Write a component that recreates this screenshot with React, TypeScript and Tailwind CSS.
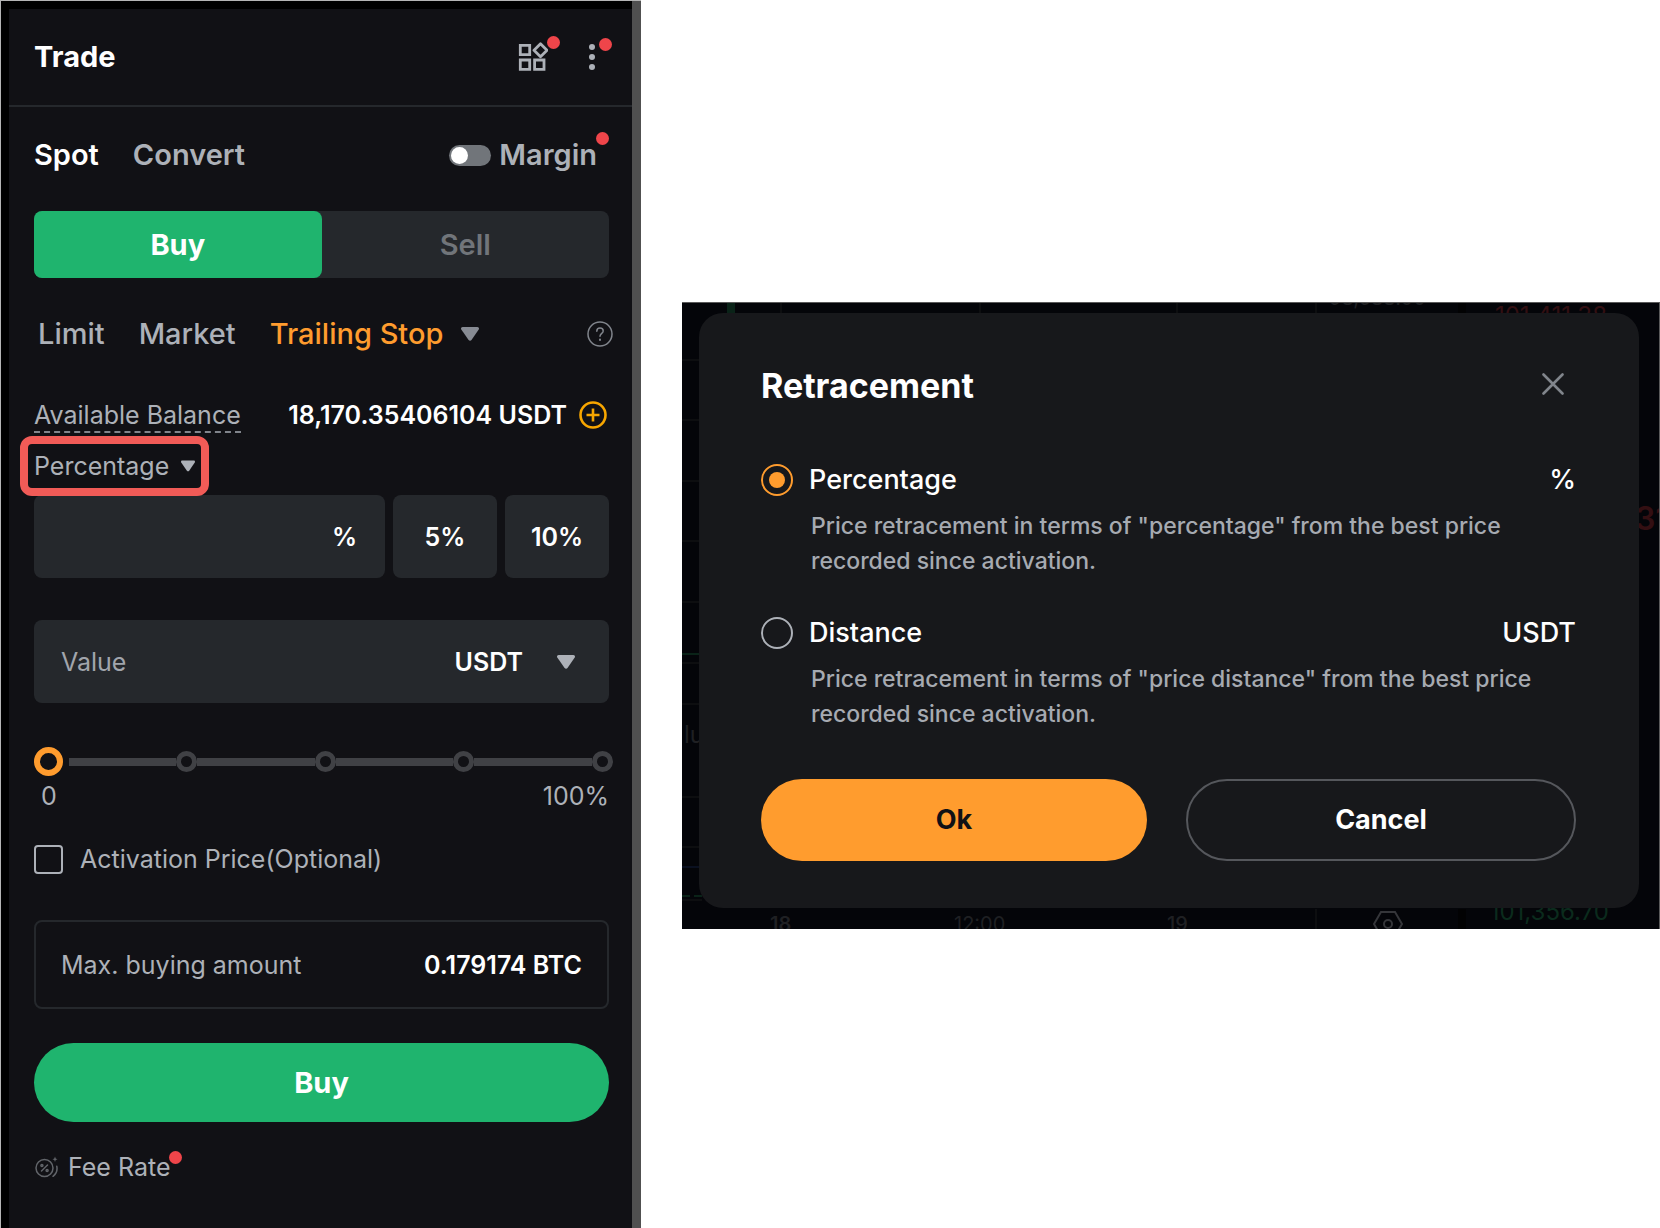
import { useState } from "react";

const Caret = ({ className }: { className: string }) => (
  <svg viewBox="0 0 18 14" fill="currentColor" className={className}>
    <path d="M1.6 0h14.8c1.3 0 2 1.400 1.300 2.500l-7.200 10.500c-.7 1-2.200 1-2.900 0L.3 2.500C-.4 1.400.3 0 1.600 0z" />
  </svg>
);

const GridIcon = () => (
  <svg
    viewBox="0 0 30 30"
    fill="none"
    stroke="currentColor"
    strokeWidth="2.800"
    className="size-[30px]"
  >
    <path d="M2.300 3.300h9.400v9.400H2.300zM2.300 18h9.400v9.400H2.300zM16.600 18H26v9.400h-9.400z" />
    <path d="M22.500 1.800 29 8.300 22.500 14.800 16 8.300z" strokeLinejoin="round" />
  </svg>
);

const MoreIcon = () => (
  <svg viewBox="0 0 8 26" fill="currentColor" className="w-2 h-[26px]">
    <circle cx="4" cy="3" r="3" />
    <circle cx="4" cy="13" r="3" />
    <circle cx="4" cy="23" r="3" />
  </svg>
);

const HelpIcon = () => (
  <svg
    viewBox="0 0 26 26"
    fill="none"
    stroke="currentColor"
    strokeWidth="1.500"
    strokeLinecap="round"
    className="size-[26px]"
  >
    <circle cx="13" cy="13" r="12" />
    <path d="M9.800 10.200c0-1.900 1.400-3.200 3.200-3.200s3.200 1.200 3.200 2.900c0 2.400-3.200 2.600-3.200 5.400" />
    <path d="M13 18.600v.4" strokeWidth="2" />
  </svg>
);

const PlusIcon = () => (
  <svg
    viewBox="0 0 28 28"
    fill="none"
    stroke="currentColor"
    strokeWidth="2.600"
    className="size-7"
  >
    <circle cx="14" cy="14" r="12.500" />
    <path d="M14 7.500v13M7.500 14h13" />
  </svg>
);

const CloseIcon = () => (
  <svg
    viewBox="0 0 22 22"
    fill="none"
    stroke="currentColor"
    strokeWidth="2.600"
    strokeLinecap="round"
    className="size-[22px]"
  >
    <path d="M1.500 1.500l19 19M20.500 1.500l-19 19" />
  </svg>
);

const FeeIcon = () => (
  <svg
    viewBox="0 0 24 22"
    fill="none"
    stroke="currentColor"
    strokeWidth="1.500"
    strokeLinecap="round"
    className="w-6 h-[22px]"
  >
    <circle cx="10.500" cy="12" r="8.500" />
    <path d="M7.500 15l6-6" />
    <circle cx="7.900" cy="9.600" r="1" />
    <circle cx="13.100" cy="14.400" r="1" />
    <path d="M19 20.300c3.400-2.600 4.600-6 3.800-10" />
    <path
      d="M21 .5l.7 2 1.800.8-1.800.7-.7 2-.7-2-1.800-.7 1.800-.8z"
      fill="currentColor"
      stroke="none"
    />
  </svg>
);

const SettingsIcon = () => (
  <svg
    viewBox="0 0 30 26"
    fill="none"
    stroke="currentColor"
    strokeWidth="2"
    className="w-[30px] h-[26px]"
  >
    <path d="M8 1h14l7 12-7 12H8L1 13z" />
    <circle cx="15" cy="13" r="4" />
  </svg>
);

const Dot = ({ className }: { className: string }) => (
  <span
    className={`absolute size-[13px] rounded-full bg-[#ef454a] ${className}`}
  />
);

const TradePanel = () => {
  const [side, setSide] = useState("buy");
  const [amount, setAmount] = useState(0);

  return (
    <section className="border-t border-l border-[#b5b5b5] bg-black min-h-screen flex text-[25px] leading-8">
      <div className="flex-1 min-w-0 mt-2 ml-2 bg-[#111115] text-[#adb1b8]">
        <header className="flex items-center h-[98px] pl-[25px] pr-9 border-b-2 border-[#25282c]">
          <h1 className="flex-1 text-[29px] font-bold text-white">Trade</h1>
          <button aria-label="Widgets" className="relative mr-10">
            <GridIcon />
            <Dot className="-top-1.5 -right-3" />
          </button>
          <button aria-label="More" className="relative">
            <MoreIcon />
            <Dot className="-top-1.5 -right-4" />
          </button>
        </header>

        <div className="pl-[25px] pr-[23px] pt-[31px]">
          <nav className="flex items-center gap-[34px] text-[29px] leading-[34px] font-semibold">
            <a href="#spot" className="text-white">
              Spot
            </a>
            <a href="#convert" className="flex-1">
              Convert
            </a>
            <label className="relative flex items-center gap-2 mr-3">
              <input
                type="checkbox"
                role="switch"
                className="appearance-none w-[42px] h-[21px] rounded-full bg-[#71757a] flex items-center px-0.5 before:size-[17px] before:rounded-full before:bg-white checked:justify-end"
              />
              Margin
              <Dot className="-top-1.5 -right-3" />
            </label>
          </nav>

          <div className="mt-[39px] flex rounded-lg bg-[#25282c] h-[67px] text-[29px] font-semibold">
            <button
              onClick={() => setSide("buy")}
              className={
                side === "buy"
                  ? "flex-1 rounded-lg bg-[#1fb46e] font-bold text-white"
                  : "flex-1 rounded-lg text-[#71757a]"
              }
            >
              Buy
            </button>
            <button
              onClick={() => setSide("sell")}
              className={
                side === "sell"
                  ? "flex-1 rounded-lg bg-[#ef454a] font-bold text-white"
                  : "flex-1 rounded-lg text-[#71757a]"
              }
            >
              Sell
            </button>
          </div>

          <div className="mt-[39px] pl-1 -mr-1 flex items-center text-[29px] leading-[34px] font-medium">
            <button className="mr-[34px]">Limit</button>
            <button className="mr-[34px]">Market</button>
            <div className="flex items-center gap-[18px] flex-1">
              <select
                aria-label="Order type"
                className="appearance-none field-sizing-content text-[#ff9c2e]"
              >
                <option>Trailing Stop</option>
                <option>Conditional</option>
              </select>
              <Caret className="w-[18px] h-3.5 text-[#878b93]" />
            </div>
            <button aria-label="Help" className="text-[#81858c]">
              <HelpIcon />
            </button>
          </div>

          <div className="mt-12 flex items-start justify-between">
            <span className="border-b-2 border-dashed border-[#81858c]">
              Available Balance
            </span>
            <span className="flex items-center gap-3 pr-0.5 font-semibold text-white">
              18,170.35406104 USDT
              <button aria-label="Deposit" className="text-[#f7a600]">
                <PlusIcon />
              </button>
            </span>
          </div>

          <div className="relative w-fit mt-[3px] -ml-3.5 -mb-px h-[60px] flex items-center gap-3 px-1.5 border-8 border-[#f15b57] rounded-xl">
            <select
              aria-label="Retracement type"
              className="appearance-none field-sizing-content"
            >
              <option>Percentage</option>
              <option>Distance</option>
            </select>
            <Caret className="w-3.5 h-3" />
          </div>

          <div className="flex gap-2 h-[83px] font-semibold text-white">
            <label className="flex-1 min-w-0 flex items-center rounded-lg bg-[#25282c] px-7">
              <input
                aria-label="Retracement"
                className="flex-1 min-w-0 outline-none"
              />
              %
            </label>
            <button className="w-[104px] rounded-lg bg-[#25282c]">5%</button>
            <button className="w-[104px] rounded-lg bg-[#25282c]">10%</button>
          </div>

          <div className="mt-[42px] flex items-center h-[83px] rounded-lg bg-[#25282c] pl-[27px] pr-[34px]">
            <input
              aria-label="Value"
              placeholder="Value"
              className="flex-1 min-w-0 outline-none placeholder:text-[#a1a5ac] placeholder:opacity-100"
            />
            <select
              aria-label="Value currency"
              className="appearance-none field-sizing-content font-semibold text-white mr-[34px]"
            >
              <option>USDT</option>
              <option>BTC</option>
            </select>
            <Caret className="w-[18px] h-3.5" />
          </div>

          <div className="relative mt-11 -mr-1 flex items-center h-[29px]">
            <span className="w-[35px]" />
            {[25, 50, 75, 100].map((stop) => (
              <span
                key={stop}
                className={
                  stop === 25
                    ? "flex items-center grow-[128] basis-0"
                    : "flex items-center grow-[139] basis-0"
                }
              >
                <span className="flex-1 h-2 bg-[#404145]" />
                <span className="size-[21px] rounded-full border-[5px] border-[#404145]" />
              </span>
            ))}
            <input
              type="range"
              aria-label="Order size"
              min={0}
              max={100}
              step={25}
              value={amount}
              onChange={(e) => setAmount(Number(e.target.value))}
              className="absolute inset-0 w-full appearance-none bg-transparent [&::-webkit-slider-thumb]:appearance-none [&::-webkit-slider-thumb]:size-[29px] [&::-webkit-slider-thumb]:rounded-full [&::-webkit-slider-thumb]:border-[6px] [&::-webkit-slider-thumb]:border-[#ff9c2e] [&::-webkit-slider-thumb]:bg-[#111115]"
            />
          </div>
          <div className="mt-1 flex justify-between pl-[7px]">
            <span>0</span>
            <span>100%</span>
          </div>

          <label className="mt-[31px] flex items-center gap-[17px]">
            <input
              type="checkbox"
              className="appearance-none size-[29px] rounded-sm border-2 border-[#adb1b8] checked:bg-[#ff9c2e]"
            />
            Activation Price(Optional)
          </label>

          <div className="mt-[45px] flex items-center justify-between h-[89px] rounded-lg border-2 border-[#25282c] px-[25px]">
            <span>Max. buying amount</span>
            <span className="font-semibold text-white">0.179174 BTC</span>
          </div>

          <button className="mt-[34px] w-full h-[79px] rounded-full bg-[#1fb46e] text-[29px] font-bold text-white">
            Buy
          </button>

          <a
            href="#fee"
            className="relative mt-[29px] w-fit flex items-center gap-2.5"
          >
            <span className="text-[#62656a]">
              <FeeIcon />
            </span>
            Fee Rate
            <Dot className="top-0 -right-3" />
          </a>
        </div>
      </div>
      <div className="w-[9px] bg-[#505050]" />
    </section>
  );
};

const options = [
  {
    name: "Percentage",
    unit: "%",
    text: 'Price retracement in terms of "percentage" from the best price recorded since activation.',
  },
  {
    name: "Distance",
    unit: "USDT",
    text: 'Price retracement in terms of "price distance" from the best price recorded since activation.',
  },
];

// Dimmed chart that shows around the edges of the dialog
const ChartBackdrop = () => (
  <div aria-hidden="true" className="absolute inset-0 text-[#1f2023]">
    <svg className="absolute inset-0 size-full">
      <g stroke="#0d0e10" strokeWidth="2">
        <path d="M0 57h20M0 117h20M0 178h20M0 238h20M0 299h20M0 360h20M0 401h20M0 494h20M0 544h20M0 597h20" />
        <path d="M99 0v12M298 0v12M495 0v12M634 0v12M634 606v21" />
      </g>
      <path d="M780 0v12M780 606v21" stroke="#020203" strokeWidth="8" />
      <path d="M49 0v12" stroke="#0a2318" strokeWidth="8" />
      <path d="M0 351h20" stroke="#0a2318" strokeWidth="2" />
      <path d="M0 564h20" stroke="#0a1020" strokeWidth="2" />
      <path d="M0 593h20" stroke="#0a2318" strokeWidth="2" strokeDasharray="8 4" />
    </svg>
    <span className="absolute left-[647px] -top-[15px] text-xl leading-5">
      98,588.00
    </span>
    <span className="absolute right-[52px] top-px text-2xl leading-6 text-[#330f12]">
      101,411.38
    </span>
    <span className="absolute left-[953px] top-[198px] text-[32px] leading-9 font-semibold text-[#330f12]">
      31
    </span>
    <span className="absolute left-0.5 top-[416px] text-2xl">lu</span>
    <span className="absolute left-[88px] top-[607px] text-xl font-semibold">18</span>
    <span className="absolute left-[272px] top-[607px] text-xl">12:00</span>
    <span className="absolute left-[485px] top-[607px] text-xl font-medium">19</span>
    <span className="absolute left-[691px] top-[608px] text-[#35363a]">
      <SettingsIcon />
    </span>
    <span className="absolute right-[50px] top-[597px] text-2xl leading-6 text-[#0b2b1d]">
      101,356.70
    </span>
  </div>
);

const RetracementDialog = () => (
  <section className="relative overflow-hidden bg-[#040509] border-t border-r border-[#5a5a5a] pt-2.5 pr-5 pb-[21px] pl-[17px]">
    <ChartBackdrop />
    <div
      role="dialog"
      aria-labelledby="retracement-title"
      className="relative rounded-[24px] bg-[#17181b] pt-12 pr-[63px] pb-[47px] pl-[62px]"
    >
      <div className="flex items-center justify-between">
        <h2
          id="retracement-title"
          className="text-[34px] leading-[50px] font-bold text-white"
        >
          Retracement
        </h2>
        <button aria-label="Close" className="mr-3 pb-1 text-[#81858c]">
          <CloseIcon />
        </button>
      </div>

      <form className="mt-[52px] flex flex-col gap-[37px]">
        {options.map((option, i) => (
          <div key={option.name}>
            <label className="flex items-center text-[27px] leading-[34px] font-medium text-white">
              <input
                type="radio"
                name="retracement"
                defaultChecked={i === 0}
                className="appearance-none mr-4 size-8 rounded-full border-2 border-[#adb1b8] checked:border-[#ff9c2e] flex items-center justify-center checked:before:size-4 checked:before:rounded-full checked:before:bg-[#ff9c2e]"
              />
              <span className="flex-1">{option.name}</span>
              <span>{option.unit}</span>
            </label>
            <p className="mt-3 pl-[50px] pr-4 text-[23px] leading-[35px] font-medium text-[#a6aab1]">
              {option.text}
            </p>
          </div>
        ))}
      </form>

      <div className="mt-[47px] flex gap-[39px] text-[27px] font-bold">
        <button className="flex-1 h-[82px] rounded-full bg-[#ff9c2e] text-[#111115]">
          Ok
        </button>
        <button className="flex-1 h-[82px] rounded-full border-2 border-[#55575c] text-white">
          Cancel
        </button>
      </div>
    </div>
  </section>
);

export default function App() {
  return (
    <main className="grid grid-cols-[minmax(0,641fr)_minmax(0,978fr)] gap-[41px] min-h-screen items-start bg-white font-['Inter',sans-serif]">
      <TradePanel />
      <div className="pt-[302px]">
        <RetracementDialog />
      </div>
    </main>
  );
}
